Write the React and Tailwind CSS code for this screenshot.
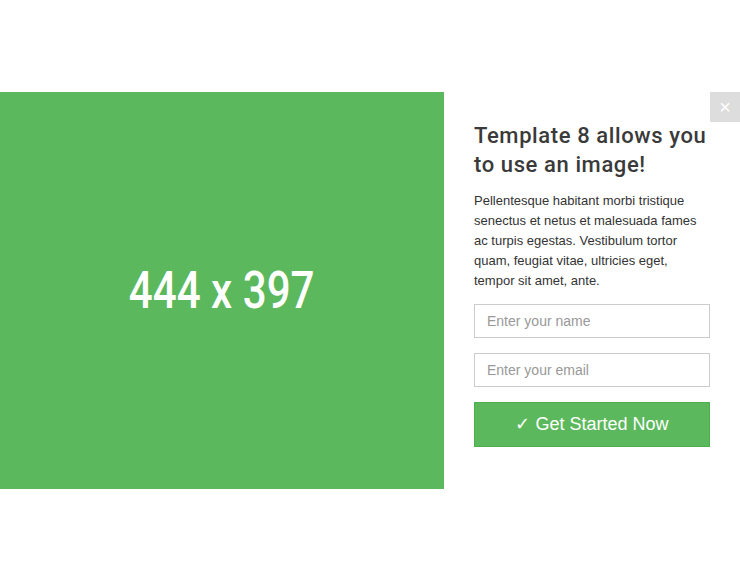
export default function App() {
  return (
    <div className="min-h-[580px] w-[740px] bg-white pt-[92px] font-['Liberation_Sans',Arial,sans-serif]">
      <div className="flex h-[397px]">
        <div className="flex w-[444px] shrink-0 items-center justify-center bg-[#5cb85c]">
          <span className="inline-block scale-x-[0.81] font-['Roboto',sans-serif] text-[52px] font-medium leading-none text-white">
            444 x 397
          </span>
        </div>
        <div className="relative flex-1 pl-[30px] pr-[30px] pt-[29px]">
          <button className="absolute right-0 top-0 flex h-[30px] w-[30px] items-center justify-center bg-[#dddddd] text-[20px] leading-none text-white">
            ×
          </button>
          <h1 className="font-['Roboto',sans-serif] text-[22px] font-medium leading-[29px] tracking-[0.6px] text-[#3a3a3a]">
            Template 8 allows you to use an image!
          </h1>
          <p className="mt-[12px] text-[13px] leading-[20px] text-[#333333]">
            Pellentesque habitant morbi tristique senectus et netus et malesuada fames ac turpis egestas. Vestibulum tortor quam, feugiat vitae, ultricies eget, tempor sit amet, ante.
          </p>
          <div className="mt-[13px] flex flex-col gap-[15px]">
            <input
              placeholder="Enter your name"
              className="h-[34px] w-full border border-[#cccccc] px-[12px] text-[14px] text-[#555555] placeholder:text-[#999999] outline-none"
            />
            <input
              placeholder="Enter your email"
              className="h-[34px] w-full border border-[#cccccc] px-[12px] text-[14px] text-[#555555] placeholder:text-[#999999] outline-none"
            />
            <button className="h-[45px] w-full border border-[#4cae4c] bg-[#5cb85c] text-[18px] text-white">
              ✓ Get Started Now
            </button>
          </div>
        </div>
      </div>
    </div>
  );
}
